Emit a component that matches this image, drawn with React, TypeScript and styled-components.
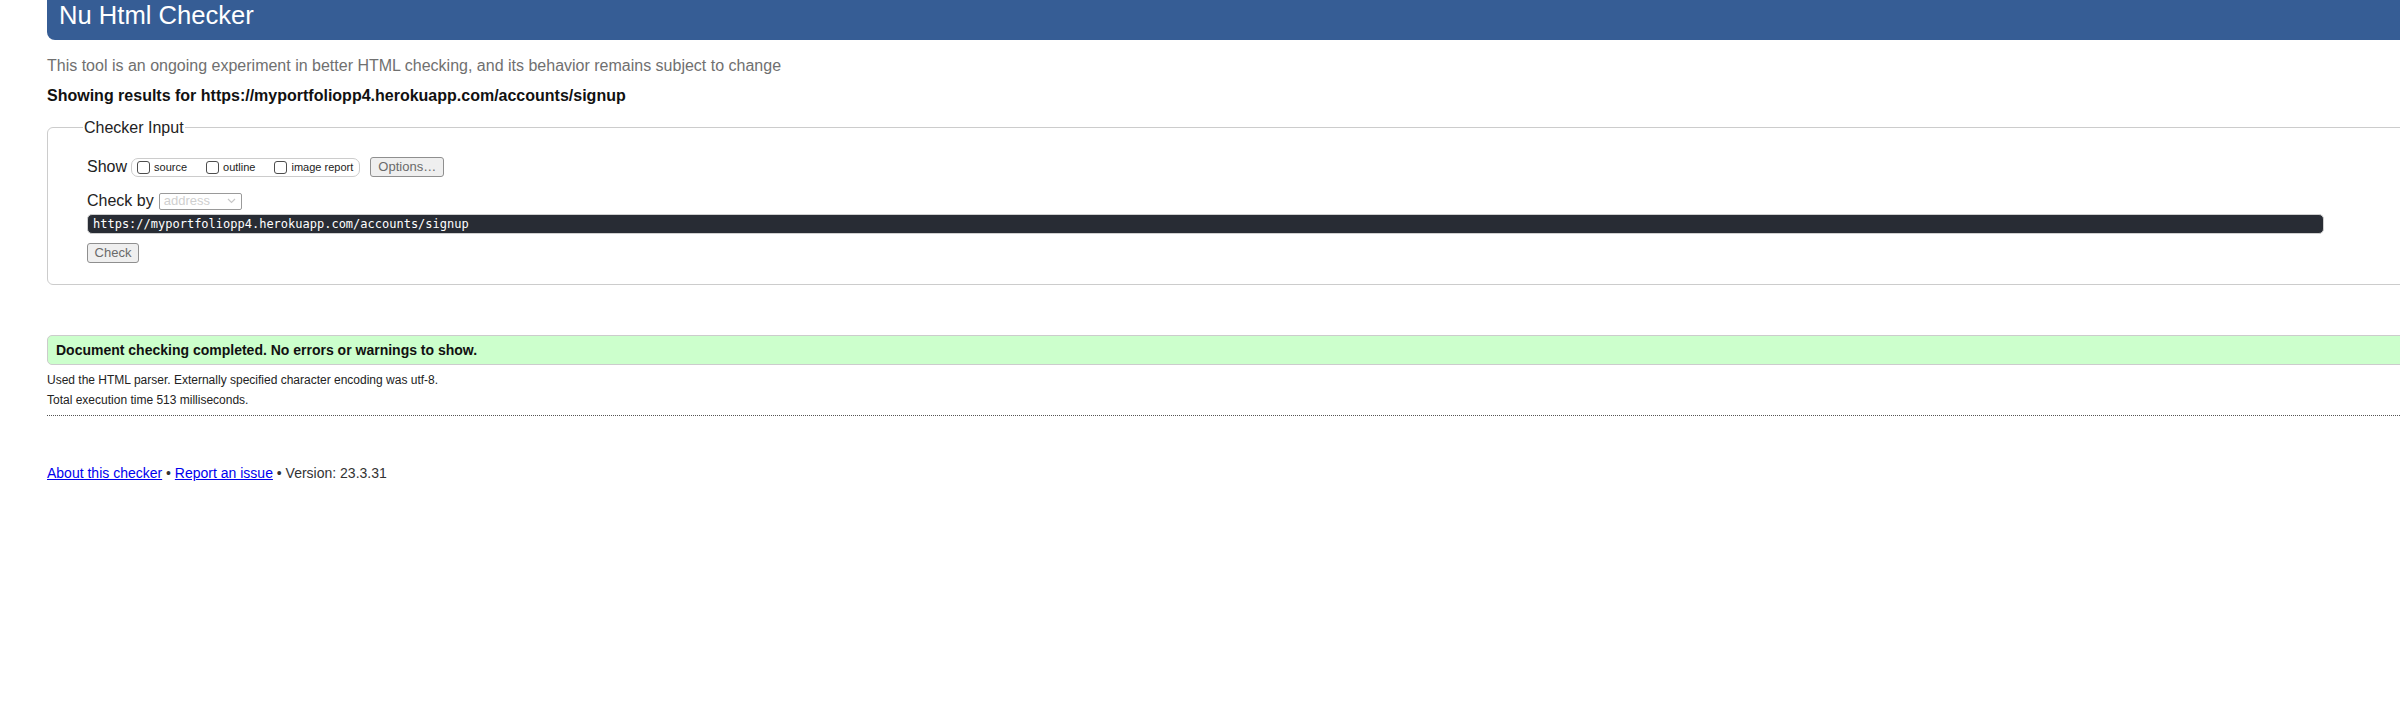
import styled, { createGlobalStyle } from 'styled-components';

const GlobalStyle = createGlobalStyle`
  html, body {
    margin: 0;
    padding: 0;
    background: #fff;
    overflow: hidden;
  }
  body {
    font-family: "Liberation Sans", Arial, sans-serif;
    color: #222;
  }
`;

const Page = styled.div`
  padding-left: 47px;
`;

const Header = styled.h1`
  margin: 0;
  height: 40px;
  box-sizing: border-box;
  width: calc(100% + 20px);
  padding: 1px 12px 0;
  background-color: #365d95;
  color: #fff;
  font-size: 25.6px;
  font-weight: normal;
  line-height: 29px;
  border-bottom-left-radius: 8px;
`;

const Subtitle = styled.p`
  margin: 16px 0 0;
  font-size: 16px;
  line-height: 20px;
  color: #707070;
`;

const ResultsFor = styled.p`
  margin: 10px 0 0;
  font-size: 16px;
  line-height: 20px;
  font-weight: bold;
  color: #111;
`;

const Fieldset = styled.fieldset`
  margin: 10px 0 0;
  width: calc(100% + 20px);
  box-sizing: border-box;
  border: 1px solid #ccc;
  border-radius: 6px;
  padding: 19px 0 21px 39px;
`;

const Legend = styled.legend`
  margin-left: -4px;
  padding: 2px 1px 0;
  font-size: 16px;
  line-height: 20px;
  color: #222;
`;

const Row = styled.div<{ $gap?: number }>`
  display: flex;
  align-items: center;
  height: 20px;
  margin-top: ${p => p.$gap ?? 0}px;
  font-size: 16px;
  line-height: 20px;
`;

const Pill = styled.div`
  display: inline-flex;
  align-items: center;
  height: 19px;
  box-sizing: border-box;
  margin-left: 4px;
  padding: 0 6px 0 5px;
  border: 1px solid #ccc;
  border-radius: 7px;
  gap: 19px;
`;

const Option = styled.label`
  display: inline-flex;
  align-items: center;
  gap: 4px;
  font-size: 11px;
  line-height: 13px;
  color: #222;
`;

const Box = styled.input`
  appearance: none;
  margin: 0;
  width: 13px;
  height: 13px;
  box-sizing: border-box;
  border: 1px solid #4d4d4d;
  border-radius: 3px;
  background: #fff;
`;

const GreyButton = styled.button<{ $w: number }>`
  width: ${p => p.$w}px;
  height: 20px;
  box-sizing: border-box;
  padding: 0;
  border: 1px solid #8f8f8f;
  border-radius: 3px;
  background: #efefef;
  color: #6a6a6a;
  font-family: "Liberation Sans", Arial, sans-serif;
  font-size: 13px;
  line-height: 18px;
`;

const OptionsButton = styled(GreyButton)`
  margin-left: 10px;
`;

const CheckButton = styled(GreyButton)`
  display: block;
  margin-top: 9px;
`;

const FakeSelect = styled.div`
  display: flex;
  align-items: center;
  justify-content: space-between;
  margin-left: 5px;
  width: 83px;
  height: 17px;
  box-sizing: border-box;
  padding: 0 5px 0 4px;
  border: 1px solid #9a9a9a;
  border-radius: 2px;
  font-size: 13px;
  color: #cfcfcf;
`;

const UrlBar = styled.div`
  margin-top: 3px;
  width: 2237px;
  height: 20px;
  box-sizing: border-box;
  padding-left: 5px;
  border: 1px solid #cfcfcf;
  border-radius: 5px;
  background: #282c34;
  color: #fff;
  font-family: "DejaVu Sans Mono", "Liberation Mono", monospace;
  font-size: 12px;
  line-height: 18px;
  white-space: nowrap;
`;

const Success = styled.div`
  margin-top: 50px;
  width: calc(100% + 20px);
  height: 30px;
  box-sizing: border-box;
  padding-left: 8px;
  border: 1px solid #ccc;
  border-radius: 5px;
  background: #ccffcc;
  font-size: 14px;
  font-weight: bold;
  line-height: 28px;
  color: #111;
`;

const Detail = styled.p<{ $top?: number }>`
  margin: ${p => p.$top ?? 0}px 0 0;
  font-size: 12px;
  line-height: 20px;
  color: #222;
`;

const Divider = styled.hr`
  margin: 5px 0 0;
  width: calc(100% + 20px);
  height: 0;
  border: 0;
  border-top: 1px dotted #555;
`;

const Footer = styled.p`
  margin: 47px 0 0;
  font-size: 14px;
  line-height: 20px;
  color: #333;

  a {
    color: #0000ee;
    text-decoration: underline;
  }
`;

function Chevron() {
  return (
    <svg width="9" height="6" viewBox="0 0 9 6" fill="none">
      <path d="M1 1l3.5 3.5L8 1" stroke="#c8c8c8" strokeWidth="1.2" />
    </svg>
  );
}

export default function App() {
  return (
    <>
      <GlobalStyle />
      <Page>
        <Header>Nu Html Checker</Header>
        <Subtitle>
          This tool is an ongoing experiment in better HTML checking, and its behavior remains subject to change
        </Subtitle>
        <ResultsFor>Showing results for https://myportfoliopp4.herokuapp.com/accounts/signup</ResultsFor>

        <Fieldset>
          <Legend>Checker Input</Legend>
          <Row>
            Show
            <Pill>
              <Option>
                <Box type="checkbox" />
                source
              </Option>
              <Option>
                <Box type="checkbox" />
                outline
              </Option>
              <Option>
                <Box type="checkbox" />
                image report
              </Option>
            </Pill>
            <OptionsButton $w={74}>Options…</OptionsButton>
          </Row>
          <Row $gap={14}>
            Check by
            <FakeSelect>
              address
              <Chevron />
            </FakeSelect>
          </Row>
          <UrlBar>https://myportfoliopp4.herokuapp.com/accounts/signup</UrlBar>
          <CheckButton $w={52}>Check</CheckButton>
        </Fieldset>

        <Success>Document checking completed. No errors or warnings to show.</Success>
        <Detail $top={5}>Used the HTML parser. Externally specified character encoding was utf-8.</Detail>
        <Detail>Total execution time 513 milliseconds.</Detail>
        <Divider />

        <Footer>
          <a href="#about">About this checker</a> • <a href="#issue">Report an issue</a> • Version: 23.3.31
        </Footer>
      </Page>
    </>
  );
}
